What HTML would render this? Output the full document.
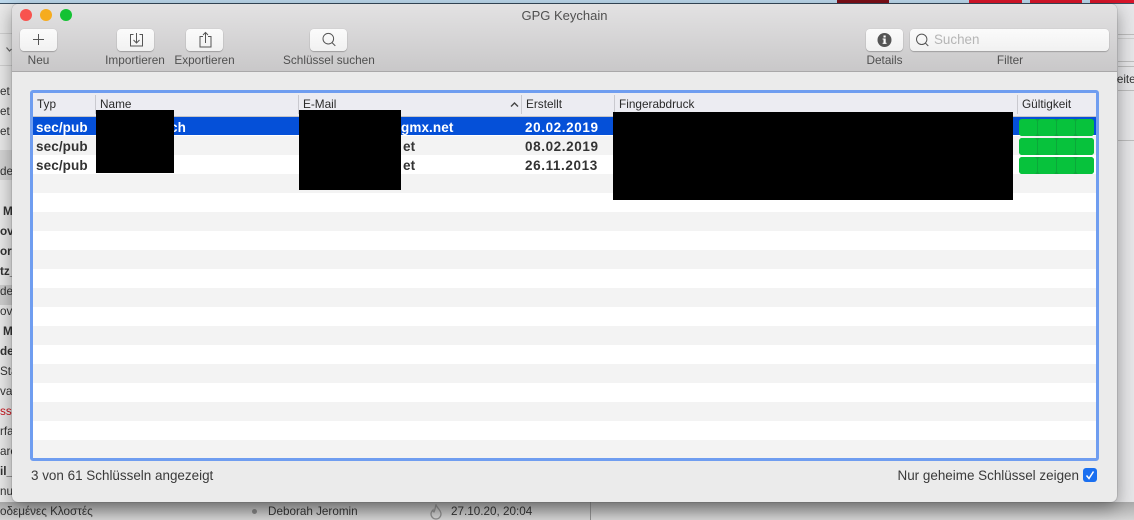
<!DOCTYPE html>
<html lang="de">
<head>
<meta charset="utf-8">
<title>GPG Keychain</title>
<style>
html,body{margin:0;padding:0}
body{width:1134px;height:520px;overflow:hidden;position:relative;background:#e6e6e8;font-family:"Liberation Sans","DejaVu Sans",sans-serif;color:#333}
.a{position:absolute;white-space:nowrap}
#win{position:absolute;left:12px;top:4px;width:1105px;height:498px;background:#ebebeb;border-radius:6px;box-shadow:0 6px 18px rgba(0,0,0,.38),0 0 1px rgba(0,0,0,.5);overflow:hidden}
#tb{position:absolute;left:0;top:0;width:1105px;height:67px;background:linear-gradient(#e3e2e3,#c9c8c9);border-bottom:1px solid #a9a8a9}
.light{position:absolute;top:5px;width:12px;height:12px;border-radius:50%}
.btn{position:absolute;top:25px;width:37px;height:22px;border-radius:4px;background:linear-gradient(#fbfbfb,#f1f1f1);box-shadow:0 1px 1px rgba(0,0,0,.22),0 0 1px rgba(0,0,0,.18)}
.btn svg{position:absolute;left:0;top:0}
.lbl{position:absolute;top:49px;font-size:11.800px;line-height:14px;color:#505050;text-align:center;white-space:nowrap}
.h{position:absolute;top:93px;font-size:11.800px;line-height:23px;height:23px;color:#2a2a2a;white-space:nowrap}
.sep{position:absolute;top:95px;width:1px;height:19px;background:#c9c9cf}
.row{position:absolute;left:33px;width:1063px;height:19px}
.c{position:absolute;font-size:13.500px;font-weight:bold;line-height:19px;color:#333;white-space:nowrap;letter-spacing:.1px}
.d{letter-spacing:.6px}
.w{color:#fff}
.blk{position:absolute;background:#000}
.bar{position:absolute;left:1019px;width:75px;height:17px;background:#0ba83a;border-radius:3px}
.g{position:absolute;height:17px;background:#07c23c;border-radius:3px}
.bg{position:absolute;font-size:11.700px;line-height:14px;color:#333;white-space:nowrap}
</style>
</head>
<body>
<!-- Background -->
<div class="a" style="left:0;top:0;width:1134px;height:4px;background:#bcd8ec"></div>
<div class="a" style="left:0;top:3px;width:1134px;height:1px;background:#3b5063"></div>
<div class="a" style="left:837px;top:0;width:52px;height:3px;background:#7d0f18"></div>
<div class="a" style="left:969px;top:0;width:53px;height:3px;background:#d8152a"></div>
<div class="a" style="left:1030px;top:0;width:52px;height:3px;background:#d8152a"></div>
<div class="a" style="left:1090px;top:0;width:44px;height:3px;background:#d8152a"></div>
<div class="a" style="left:0;top:4px;width:12px;height:512px;background:#e9e9e9"></div>
<div class="a" style="left:0;top:33px;width:12px;height:1px;background:#d0d0d0"></div>
<div class="a" style="left:0;top:65px;width:12px;height:1px;background:#d0d0d0"></div>
<div class="a" style="left:0;top:150px;width:12px;height:30px;background:#d4d4d4"></div>
<div class="a" style="left:0;top:285px;width:12px;height:20px;background:#cdcdcd"></div>
<svg class="a" style="left:6px;top:46px" width="6" height="7"><path d="M0.500 1.500l3 3.500 2-2" fill="none" stroke="#666" stroke-width="1.200"/></svg>
<div class="a" style="left:1118px;top:34px;width:16px;height:1px;background:#bdbdbd"></div>
<div class="a" style="left:1118px;top:38px;width:16px;height:1px;background:#cfcfcf"></div>
<div class="a" style="left:1118px;top:61px;width:16px;height:1px;background:#bdbdbd"></div>
<div class="a" style="left:1118px;top:66px;width:16px;height:1px;background:#bdbdbd"></div>
<div class="a" style="left:1118px;top:90px;width:16px;height:1px;background:#bdbdbd"></div>
<div class="a" style="left:1118px;top:140px;width:16px;height:1px;background:#bdbdbd"></div>
<div class="a" style="left:0;top:502px;width:1134px;height:18px;background:linear-gradient(#aaa,#d4d4d4)"></div>
<div class="a" style="left:590px;top:502px;width:1px;height:18px;background:#8e8e8e"></div>

<div class="bg" style="left:0;top:85px">et</div>
<div class="bg" style="left:0;top:105px">et</div>
<div class="bg" style="left:0;top:125px">et</div>
<div class="bg" style="left:0;top:165px">der</div>
<div class="bg" style="left:3px;top:205px;font-weight:bold">M</div>
<div class="bg" style="left:0;top:225px;font-weight:bold">ov</div>
<div class="bg" style="left:0;top:245px;font-weight:bold">or</div>
<div class="bg" style="left:0;top:265px;font-weight:bold">tz_</div>
<div class="bg" style="left:0;top:285px">der</div>
<div class="bg" style="left:0;top:305px">ov</div>
<div class="bg" style="left:3px;top:325px;font-weight:bold">M</div>
<div class="bg" style="left:0;top:345px;font-weight:bold">de</div>
<div class="bg" style="left:0;top:365px">Sta</div>
<div class="bg" style="left:0;top:385px">va</div>
<div class="bg" style="left:0;top:405px;color:#c8141c">ss</div>
<div class="bg" style="left:0;top:425px">rfa</div>
<div class="bg" style="left:0;top:445px">are</div>
<div class="bg" style="left:0;top:465px;font-weight:bold">il_</div>
<div class="bg" style="left:0;top:485px">nu</div>
<div class="bg" style="left:0;top:505px">οδεμένες Κλοστές</div>
<div class="a" style="left:252px;top:509px;width:5px;height:5px;border-radius:50%;background:#808080"></div>
<div class="bg" style="left:268px;top:505px">Deborah Jeromin</div>
<svg class="a" style="left:428px;top:504px" width="16" height="16" viewBox="0 0 16 16"><path d="M8 1c1 3 5 5 5 9a5 5 0 0 1-10 0c0-2 1-3 2-4 0 1 .5 2 1 2 1-2 1-4 2-7z" fill="none" stroke="#8a8a8a" stroke-width="1.300"/></svg>
<div class="bg" style="left:451px;top:505px">27.10.20, 20:04</div>
<div class="bg" style="left:1106px;top:73px">Weite</div>

<!-- Window -->
<div id="win">
  <div id="tb"></div>
  <div class="light" style="left:8px;background:#f8534e"></div>
  <div class="light" style="left:28px;background:#f6ac1e"></div>
  <div class="light" style="left:48px;background:#14c234"></div>
  <div class="a" style="left:0;top:4px;width:1105px;text-align:center;font-size:13px;line-height:15px;color:#505050">GPG Keychain</div>

  <div class="btn" style="left:8px"><svg width="37" height="22"><path d="M18.500 5v11M13 10.500h11" stroke="#555" stroke-width="1" fill="none"/></svg></div>
  <div class="btn" style="left:105px"><svg width="37" height="22" fill="none" stroke="#555" stroke-width="1"><path d="M16.500 5.500h-3v11.500h12V5.500h-3M19.500 4v10M16.500 11l3 3 3-3"/></svg></div>
  <div class="btn" style="left:174px"><svg width="37" height="22" fill="none" stroke="#555" stroke-width="1"><path d="M17 7.500h-3v10.500h11V7.500h-3M19.500 14V3.500M17 6l2.500-2.500L22 6"/></svg></div>
  <div class="btn" style="left:298px"><svg width="37" height="22" fill="none" stroke="#555" stroke-width="1"><circle cx="18.300" cy="9.700" r="5.300"/><path d="M22 13.600l3.300 3.300"/></svg></div>
  <div class="btn" style="left:854px"><svg width="37" height="22"><circle cx="18.500" cy="11" r="7" fill="#555"/><rect x="17.500" y="9.500" width="2.200" height="5.200" fill="#fff"/><rect x="16.600" y="9.500" width="1.500" height="1" fill="#fff"/><rect x="16.600" y="13.800" width="4" height="1" fill="#fff"/><rect x="17.500" y="6.500" width="2.200" height="2" fill="#fff"/></svg></div>
  <div class="btn" style="left:898px;width:199px"><svg width="30" height="22" fill="none" stroke="#555" stroke-width="1"><circle cx="11.700" cy="10.300" r="5.200"/><path d="M15.300 14l3 3"/></svg><div class="a" style="left:24px;top:0;font-size:13.400px;line-height:22px;color:#b5b5b5">Suchen</div></div>

  <div class="lbl" style="left:8px;width:37px">Neu</div>
  <div class="lbl" style="left:93px;width:60px">Importieren</div>
  <div class="lbl" style="left:162px;width:61px">Exportieren</div>
  <div class="lbl" style="left:271px;width:91px">Schlüssel suchen</div>
  <div class="lbl" style="left:854px;width:37px">Details</div>
  <div class="lbl" style="left:968px;width:60px">Filter</div>
</div>

<!-- Table focus ring -->
<div class="a" style="left:30px;top:90px;width:1063px;height:365px;border:3px solid #6f9df0;border-radius:3px;background:#fff"></div>
<div class="a" style="left:33px;top:93px;width:1063px;height:23px;background:#ececf2"></div>
<div class="a" style="left:33px;top:116px;width:1063px;height:1px;background:#c4c4c8"></div>
<div class="sep" style="left:95px"></div>
<div class="sep" style="left:298px"></div>
<div class="sep" style="left:521px"></div>
<div class="sep" style="left:614px"></div>
<div class="sep" style="left:1017px"></div>
<div class="h" style="left:37px">Typ</div>
<div class="h" style="left:100px">Name</div>
<div class="h" style="left:303px">E-Mail</div>
<svg class="a" style="left:510px;top:101px" width="9" height="7"><path d="M1 5.500l3.500-3.500 3.500 3.500" fill="none" stroke="#444" stroke-width="1.400"/></svg>
<div class="h" style="left:526px">Erstellt</div>
<div class="h" style="left:619px">Fingerabdruck</div>
<div class="h" style="left:1022px">Gültigkeit</div>

<!-- Rows -->
<div class="row" style="top:117px;height:18px;background:#0550d8"></div>
<div class="row" style="top:136px;background:#f3f3f3"></div>
<div class="row" style="top:174px;background:#f3f3f3"></div>
<div class="row" style="top:212px;background:#f3f3f3"></div>
<div class="row" style="top:250px;background:#f3f3f3"></div>
<div class="row" style="top:288px;background:#f3f3f3"></div>
<div class="row" style="top:326px;background:#f3f3f3"></div>
<div class="row" style="top:364px;background:#f3f3f3"></div>
<div class="row" style="top:402px;background:#f3f3f3"></div>
<div class="row" style="top:440px;height:18px;background:#f3f3f3"></div>

<div class="c w" style="left:36px;top:118px">sec/pub</div>
<div class="c" style="left:36px;top:137px">sec/pub</div>
<div class="c" style="left:36px;top:156px">sec/pub</div>
<div class="c w" style="left:170px;top:118px">ch</div>
<div class="c w" style="left:401px;top:118px">gmx.net</div>
<div class="c" style="left:403px;top:137px">et</div>
<div class="c" style="left:403px;top:156px">et</div>
<div class="c w d" style="left:525px;top:118px">20.02.2019</div>
<div class="c d" style="left:525px;top:137px">08.02.2019</div>
<div class="c d" style="left:525px;top:156px">26.11.2013</div>

<!-- Validity -->
<div class="bar" style="top:119px"></div>
<div class="g" style="left:1019px;top:119px;width:18px"></div><div class="g" style="left:1038px;top:119px;width:18px"></div><div class="g" style="left:1057px;top:119px;width:18px"></div><div class="g" style="left:1076px;top:119px;width:18px"></div>
<div class="bar" style="top:138px"></div>
<div class="g" style="left:1019px;top:138px;width:18px"></div><div class="g" style="left:1038px;top:138px;width:18px"></div><div class="g" style="left:1057px;top:138px;width:18px"></div><div class="g" style="left:1076px;top:138px;width:18px"></div>
<div class="bar" style="top:157px"></div>
<div class="g" style="left:1019px;top:157px;width:18px"></div><div class="g" style="left:1038px;top:157px;width:18px"></div><div class="g" style="left:1057px;top:157px;width:18px"></div><div class="g" style="left:1076px;top:157px;width:18px"></div>

<!-- Redactions -->
<div class="blk" style="left:96px;top:110px;width:78px;height:63px"></div>
<div class="blk" style="left:299px;top:110px;width:102px;height:80px"></div>
<div class="blk" style="left:613px;top:112px;width:400px;height:88px"></div>

<!-- Footer -->
<div class="a" style="left:31px;top:468px;font-size:13.450px;line-height:16px;color:#3a3a3a">3 von 61 Schlüsseln angezeigt</div>
<div class="a" style="right:55px;top:468px;font-size:13.450px;line-height:16px;color:#3a3a3a">Nur geheime Schlüssel zeigen</div>
<div class="a" style="left:1083px;top:468px;width:14px;height:14px;border-radius:3px;background:#1a6ff0"><svg width="14" height="14" style="display:block"><path d="M3.500 7.500l2.500 3 4.500-7" fill="none" stroke="#fff" stroke-width="1.500"/></svg></div>
</body>
</html>
